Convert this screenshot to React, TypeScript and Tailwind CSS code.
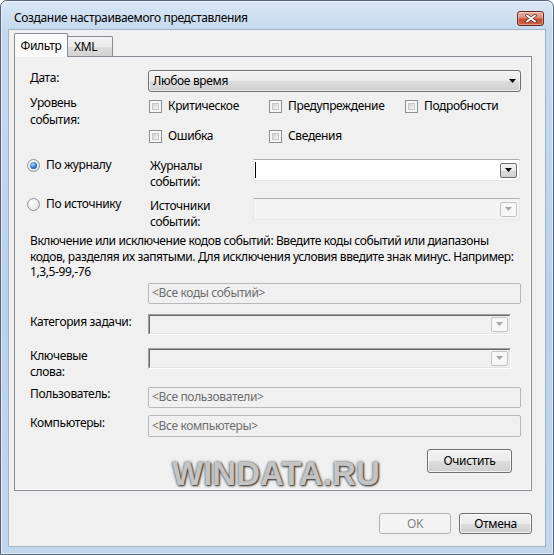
import React from "react";

function Arrow({ color = "#000" }: { color?: string }) {
	return (
		<svg width="7" height="4" viewBox="0 0 7 4" className="block">
			<path d="M0 0H7L3.5 4Z" fill={color} />
		</svg>
	);
}

function Checkbox({ label, width }: { label: string; width: string }) {
	return (
		<div className={`flex h-[16px] items-center gap-[6px] ${width}`}>
			<span className="flex h-[13px] w-[13px] shrink-0 border border-[#8e8f8f] bg-[#f6f6f6] p-[2px]">
				<span className="block h-full w-full border border-[#c6c6c6] bg-[linear-gradient(135deg,#d2d2d2,#f6f6f6)]" />
			</span>
			<span className="leading-[16px]">{label}</span>
		</div>
	);
}

function Radio({ checked, label }: { checked?: boolean; label: string }) {
	return (
		<div className="-ml-[3px] flex h-[16px] w-[123px] shrink-0 items-center gap-[6px]">
			<span className="flex h-[13px] w-[13px] shrink-0 items-center justify-center rounded-full border border-[#8e8f8f] bg-[radial-gradient(circle_at_35%_35%,#ffffff,#dcdcdc)]">
				{checked && (
					<span className="h-[7px] w-[7px] rounded-full bg-[radial-gradient(circle_at_40%_35%,#a6dcff,#2b74c8_55%,#0f3f7e)]" />
				)}
			</span>
			<span className="leading-[16px]">{label}</span>
		</div>
	);
}

function DropButton({ disabled }: { disabled?: boolean }) {
	return (
		<span
			className={
				disabled
					? "flex h-[15px] w-[17px] items-center justify-center rounded-[2px] border border-[#c3c3c3] bg-[#f7f7f7]"
					: "flex h-[15px] w-[17px] items-center justify-center rounded-[2px] border border-[#707070] bg-[linear-gradient(to_bottom,#f2f2f2_0%,#ebebeb_50%,#dddddd_51%,#cfcfcf_100%)]"
			}
		>
			<Arrow color={disabled ? "#a8a8a8" : "#000"} />
		</span>
	);
}

function Field({ text, h = "h-[21px]" }: { text: string; h?: string }) {
	return (
		<div className={`flex ${h} w-[373px] items-center rounded-[2px] border border-[#b5b9bd] bg-[#f0f0f0] pl-[3px] text-[#6d6d6d]`}>
			{text}
		</div>
	);
}

function SunkenCombo() {
	return (
		<div className="h-[21px] w-[363px] border border-t-[#a0a0a0] border-l-[#a0a0a0] border-b-white border-r-white">
			<div className="flex h-full w-full items-center justify-end border border-t-[#696969] border-l-[#696969] border-b-[#e3e3e3] border-r-[#e3e3e3] bg-[#f0f0f0] pr-[1px]">
				<DropButton disabled />
			</div>
		</div>
	);
}

function Button({ label, width, h, disabled }: { label: string; width: string; h: string; disabled?: boolean }) {
	return (
		<div
			className={
				disabled
					? `flex ${width} ${h} items-center justify-center rounded-[3px] border border-[#adb2b5] bg-[#f4f4f4] text-[#838383]`
					: `flex ${width} ${h} items-center justify-center rounded-[3px] border border-[#707070] bg-[linear-gradient(to_bottom,#f2f2f2_0%,#ebebeb_50%,#dddddd_51%,#cfcfcf_100%)] shadow-[inset_0_0_0_1px_rgba(255,255,255,0.7)]`
			}
		>
			{label}
		</div>
	);
}

export default function App() {
	return (
		<div className="relative h-[555px] w-[554px] overflow-hidden font-['Noto_Sans',sans-serif] text-[12px] tracking-[-0.35px] text-black">
			<div className="flex h-full w-full flex-col rounded-t-[7px] border border-[#55667c] bg-[linear-gradient(to_bottom,#dae7f4_0px,#c6daef_28px,#bad2ea_55%,#c2d7ed_100%)] shadow-[inset_0_0_0_1px_rgba(255,255,255,0.5)]">
				{/* title bar */}
				<div className="flex h-[28px] shrink-0 items-start">
					<span className="ml-[13px] mt-[9px] leading-[16px]">Создание настраиваемого представления</span>
					<div className="ml-auto mr-[9px] mt-[10px] flex h-[15px] w-[27px] items-center justify-center rounded-[3px] border border-[#6b2a1e] bg-[linear-gradient(to_bottom,#eab0a2_0%,#d98b76_45%,#c44a2e_55%,#cc6446_100%)] shadow-[inset_0_0_0_1px_rgba(255,255,255,0.35)]">
						<svg width="12" height="9" viewBox="0 0 12 9">
							<path d="M2 1.5L10 7.5M10 1.5L2 7.5" stroke="#5a2a20" strokeWidth="3.4" strokeLinecap="round" />
							<path d="M2 1.5L10 7.5M10 1.5L2 7.5" stroke="#ffffff" strokeWidth="2" strokeLinecap="round" />
						</svg>
					</div>
				</div>

				{/* client area */}
				<div className="mx-[7px] flex h-[518px] shrink-0 flex-col border border-[#9fb3c9] bg-[#f0f0f0]">
					{/* tabs */}
					<div className="mt-[3px] flex h-[23px] items-end pl-[5px]">
						<div className="relative z-10 -mb-px flex h-[24px] w-[54px] items-start justify-center rounded-t-[2px] border border-b-0 border-[#898c95] bg-[#fbfbfb] pt-[3px]">
							Фильтр
						</div>
						<div className="flex h-[20px] w-[45px] items-start rounded-tr-[2px] border border-b-0 border-l-0 border-[#898c95] bg-[linear-gradient(to_bottom,#f3f3f3_0%,#ebebeb_50%,#dddddd_51%,#d2d2d2_100%)] pl-[6px] pt-[1px]">
							XML
						</div>
					</div>

					{/* tab page */}
					<div className="ml-[5px] flex h-[435px] w-[518px] flex-col border border-[#898c95] bg-[#f0f0f0] pl-[15px] shadow-[inset_-1px_-1px_0_#ffffff]">
						{/* Дата */}
						<div className="mt-[13px] flex h-[22px] items-start">
							<span className="w-[118px] shrink-0 leading-[16px]">Дата:</span>
							<div className="flex h-[22px] w-[373px] items-center justify-between rounded-[3px] border border-[#707070] bg-[linear-gradient(to_bottom,#f2f2f2_0%,#ebebeb_50%,#dddddd_51%,#cfcfcf_100%)] pl-[4px] pr-[4px] shadow-[inset_0_0_0_1px_rgba(255,255,255,0.6)]">
								<span>Любое время</span>
								<Arrow />
							</div>
						</div>

						{/* Уровень события */}
						<div className="mt-[2px] flex items-start">
							<span className="w-[119px] shrink-0 leading-[17px]">
								Уровень
								<br />
								события:
							</span>
							<div className="mt-[4px] flex flex-col gap-[14px]">
								<div className="flex">
									<Checkbox label="Критическое" width="w-[120px]" />
									<Checkbox label="Предупреждение" width="w-[136px]" />
									<Checkbox label="Подробности" width="w-[110px]" />
								</div>
								<div className="flex">
									<Checkbox label="Ошибка" width="w-[120px]" />
									<Checkbox label="Сведения" width="w-[136px]" />
								</div>
							</div>
						</div>

						{/* По журналу */}
						<div className="mt-[13px] flex items-start">
							<Radio checked label="По журналу" />
							<span className="mt-[1px] w-[103px] shrink-0 leading-[16px]">
								Журналы
								<br />
								событий:
							</span>
							<div className="mt-[2px] flex h-[22px] w-[267px] items-center justify-between border border-[#e3e9ef] border-t-[#abadb3] bg-white pl-[1px] pr-[2px]">
								<span className="h-[16px] w-px bg-black" />
								<DropButton />
							</div>
						</div>

						{/* По источнику */}
						<div className="mt-[6px] flex items-start">
							<Radio label="По источнику" />
							<span className="mt-[2px] w-[103px] shrink-0 leading-[16px]">
								Источники
								<br />
								событий:
							</span>
							<div className="mt-[2px] flex h-[22px] w-[267px] items-center justify-end border border-[#e3e9ef] border-t-[#abadb3] bg-[#f4f4f4] pr-[2px]">
								<DropButton disabled />
							</div>
						</div>

						{/* Коды событий */}
						<p className="mt-[3px] whitespace-nowrap leading-[15.5px] tracking-[-0.4px]">
							Включение или исключение кодов событий: Введите коды событий или диапазоны
							<br />
							кодов, разделяя их запятыми. Для исключения условия введите знак минус. Например:
							<br />
							1,3,5-99,-76
						</p>
						<div className="ml-[118px] mt-[3px]">
							<Field text="<Все коды событий>" />
						</div>

						{/* Категория задачи */}
						<div className="mt-[10px] flex items-start">
							<span className="w-[118px] shrink-0 leading-[16px]">Категория задачи:</span>
							<SunkenCombo />
						</div>

						{/* Ключевые слова */}
						<div className="mt-[13px] flex items-start">
							<span className="w-[118px] shrink-0 leading-[16px]">
								Ключевые
								<br />
								слова:
							</span>
							<SunkenCombo />
						</div>

						{/* Пользователь */}
						<div className="mt-[6px] flex items-start">
							<span className="w-[118px] shrink-0 leading-[16px]">Пользователь:</span>
							<div className="mt-[1px]">
								<Field text="<Все пользователи>" />
							</div>
						</div>

						{/* Компьютеры */}
						<div className="mt-[7px] flex items-start">
							<span className="w-[118px] shrink-0 leading-[16px]">Компьютеры:</span>
							<Field text="<Все компьютеры>" h="h-[22px]" />
						</div>

						<div className="mt-[12px] flex justify-end pr-[19px]">
							<Button label="Очистить" width="w-[85px]" h="h-[24px]" />
						</div>
					</div>

					{/* dialog buttons */}
					<div className="mt-[22px] flex justify-end gap-[8px] pr-[13px]">
						<Button label="OK" width="w-[72px]" h="h-[21px]" disabled />
						<Button label="Отмена" width="w-[73px]" h="h-[21px]" />
					</div>
				</div>
			</div>

			{/* watermark */}
			<div className="pointer-events-none absolute left-[172px] top-[457px] font-['Liberation_Sans',Arial,sans-serif] text-[33px] font-bold leading-none tracking-normal text-[#c4c4c4] [text-shadow:1px_1px_2px_#333,0_0_3px_#555]">
				WINDATA.RU
			</div>
		</div>
	);
}
